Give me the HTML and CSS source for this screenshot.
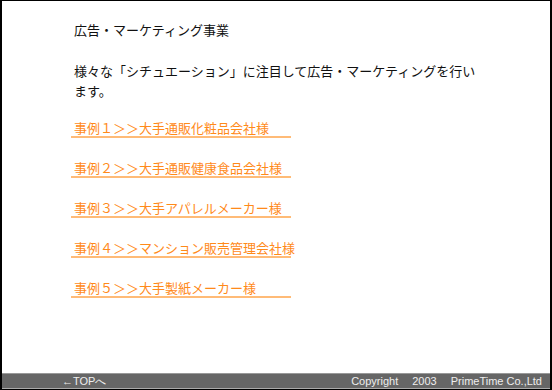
FILE: index.html
```html
<!DOCTYPE html>
<html lang="ja">
<head>
<meta charset="utf-8">
<link rel="stylesheet" href="styles.css">
</head>
<body>
<div class="frame">
  <main class="content">
    <h1 class="title">広告・マーケティング事業</h1>
    <p class="lead">様々な「シチュエーション」に注目して広告・マーケティングを行います。</p>
    <ul class="cases">
      <li><a href="#">事例１＞＞大手通販化粧品会社様</a></li>
      <li><a href="#">事例２＞＞大手通販健康食品会社様</a></li>
      <li><a href="#">事例３＞＞大手アパレルメーカー様</a></li>
      <li><a href="#">事例４＞＞マンション販売管理会社様</a></li>
      <li><a href="#">事例５＞＞大手製紙メーカー様</a></li>
    </ul>
  </main>
  <footer class="footer">
    <a class="top" href="#">←TOPへ</a>
    <span class="copy"><span>Copyright</span><span>2003</span><span>PrimeTime Co.,Ltd</span></span>
  </footer>
</div>
</body>
</html>
```
FILE: styles.css
```css
html, body {
  margin: 0;
  padding: 0;
  background: #fff;
}
.frame {
  width: 552px;
  height: 390px;
  box-sizing: border-box;
  border-top: 1px solid #000;
  border-left: 2px solid #000;
  border-right: 2px solid #000;
  border-bottom: 1px solid #000;
  display: flex;
  flex-direction: column;
  font-family: "Noto Sans CJK JP", sans-serif;
}
.content {
  flex: 1;
  padding: 20px 0 0 72px;
  width: 412px;
}
.title {
  margin: 0;
  font-size: 13px;
  font-weight: normal;
  line-height: 18px;
  color: #111;
}
.lead {
  margin: 22px 0 0;
  font-size: 13px;
  line-height: 20px;
  color: #111;
}
.cases {
  list-style: none;
  margin: 19px 0 0 -3px;
  padding: 0;
  display: flex;
  flex-direction: column;
  gap: 22px;
}
.cases li {
  box-sizing: content-box;
  width: 217px;
  height: 16px;
  border-bottom: 2px solid #ffbb77;
  padding-left: 3px;
  white-space: nowrap;
  font-size: 13px;
  line-height: 16px;
}
.cases a {
  color: #ff8a1a;
  text-decoration: none;
}
.footer {
  height: 14px;
  background: #666;
  border-top: 1px solid #999;
  border-bottom: 1px solid #aaa;
  display: flex;
  justify-content: space-between;
  align-items: center;
  font-family: "Liberation Sans", Arial, sans-serif;
  font-size: 11px;
  color: #eee;
  padding: 0 8px 0 60px;
}
.top {
  color: #eee;
  text-decoration: none;
}
.copy {
  display: flex;
  gap: 14px;
}
```
